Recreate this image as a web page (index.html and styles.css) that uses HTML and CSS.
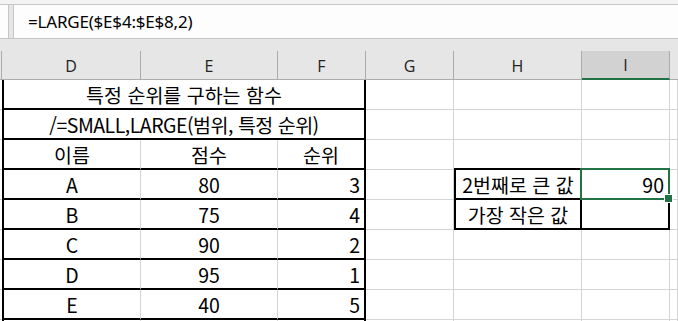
FILE: index.html
```html
<!DOCTYPE html>
<html lang="ko">
<head>
<meta charset="utf-8">
<title>LARGE 함수</title>
<link rel="stylesheet" href="styles.css">
</head>
<body>
<div class="app">
  <div class="top-strip"></div>
  <div class="formula-bar">
    <div class="name-box"></div>
    <div class="fx-input">=LARGE($E$4:$E$8,2)</div>
  </div>
  <div class="ribbon-gap"></div>

  <div class="sheet">
    <!-- column headers -->
    <div class="hd corner"></div>
    <div class="hd">D</div>
    <div class="hd">E</div>
    <div class="hd">F</div>
    <div class="hd">G</div>
    <div class="hd">H</div>
    <div class="hd selected">I</div>
    <div class="hd last"></div>

    <!-- row 1 -->
    <div class="c strip"></div>
    <div class="c span3 box-l box-r box-b center">특정 순위를 구하는 함수</div>
    <div class="c"></div>
    <div class="c"></div>
    <div class="c"></div>
    <div class="c"></div>

    <!-- row 2 -->
    <div class="c strip"></div>
    <div class="c span3 box-l box-r box-b center tight">/=SMALL,LARGE(범위, 특정 순위)</div>
    <div class="c"></div>
    <div class="c"></div>
    <div class="c"></div>
    <div class="c"></div>

    <!-- row 3 -->
    <div class="c strip"></div>
    <div class="c box-l box-b center">이름</div>
    <div class="c box-b center">점수</div>
    <div class="c box-r box-b center">순위</div>
    <div class="c"></div>
    <div class="c box-b"></div>
    <div class="c box-b"></div>
    <div class="c"></div>

    <!-- row 4 -->
    <div class="c strip"></div>
    <div class="c box-l box-b center">A</div>
    <div class="c box-b center">80</div>
    <div class="c box-r box-b right">3</div>
    <div class="c"></div>
    <div class="c box-l box-r box-b center">2번째로 큰 값</div>
    <div class="c box-r box-b right active">90</div>
    <div class="c"></div>

    <!-- row 5 -->
    <div class="c strip"></div>
    <div class="c box-l box-b center">B</div>
    <div class="c box-b center">75</div>
    <div class="c box-r box-b right">4</div>
    <div class="c"></div>
    <div class="c box-l box-r box-b center">가장 작은 값</div>
    <div class="c box-r box-b right"></div>
    <div class="c"></div>

    <!-- row 6 -->
    <div class="c strip"></div>
    <div class="c box-l box-b center">C</div>
    <div class="c box-b center">90</div>
    <div class="c box-r box-b right">2</div>
    <div class="c"></div>
    <div class="c"></div>
    <div class="c"></div>
    <div class="c"></div>

    <!-- row 7 -->
    <div class="c strip"></div>
    <div class="c box-l box-b center">D</div>
    <div class="c box-b center">95</div>
    <div class="c box-r box-b right">1</div>
    <div class="c"></div>
    <div class="c"></div>
    <div class="c"></div>
    <div class="c"></div>

    <!-- row 8 -->
    <div class="c strip"></div>
    <div class="c box-l box-b center">E</div>
    <div class="c box-b center">40</div>
    <div class="c box-r box-b right">5</div>
    <div class="c"></div>
    <div class="c"></div>
    <div class="c"></div>
    <div class="c"></div>

    <!-- row 9, only its top edge shows -->
    <div class="c strip"></div>
    <div class="c box-l"></div>
    <div class="c"></div>
    <div class="c box-r"></div>
    <div class="c"></div>
    <div class="c"></div>
    <div class="c"></div>
    <div class="c"></div>
  </div>
</div>
</body>
</html>
```

FILE: styles.css
```css
* { box-sizing: border-box; }

html, body {
  margin: 0;
  padding: 0;
  width: 678px;
  height: 321px;
  overflow: hidden;
  background: #ffffff;
}

.app {
  display: flex;
  flex-direction: column;
  width: 678px;
  font-family: "Noto Sans CJK KR", sans-serif;
  color: #000;
}

.top-strip {
  height: 4px;
  background: #f3f3f3;
}

.formula-bar {
  height: 35px;
  display: flex;
  gap: 4px;
  background: #e6e6e6;
  border-top: 1px solid #c6c6c6;
  border-bottom: 1px solid #c6c6c6;
}

.name-box {
  width: 9px;
  background: #fdfdfd;
  border-right: 1px solid #c6c6c6;
}

.fx-input {
  flex: 1;
  background: #fdfdfd;
  border-left: 1px solid #c6c6c6;
  padding-left: 14px;
  display: flex;
  align-items: center;
  font-family: "Noto Sans", "Noto Sans CJK KR", sans-serif;
  font-size: 17px;
  letter-spacing: -0.2px;
}

.ribbon-gap {
  height: 12px;
  background: #e6e6e6;
}

.sheet {
  display: grid;
  grid-template-columns: 2px 139px 137px 88px 88px 128px 88px 1fr;
  grid-template-rows: 29px repeat(8, 30px) 2px;
}

/* column headers */
.hd {
  background: #e6e6e6;
  border-right: 1px solid #ababab;
  border-bottom: 1px solid #ababab;
  display: flex;
  align-items: center;
  justify-content: center;
  font-family: "Open Sans", sans-serif;
  font-size: 16px;
  color: #222;
  padding-top: 1px;
}
.hd.last { border-right: none; }
.hd.selected {
  background: #d2d2d2;
  border-bottom: 2px solid #217346;
}

/* cells */
.c {
  border-right: 1px solid #d4d4d4;
  border-bottom: 1px solid #d4d4d4;
  display: flex;
  align-items: center;
  padding: 0 3px;
  font-size: 19.5px;
  white-space: nowrap;
  position: relative;
}
.c.strip { border-right: none; }
.c.span3 { grid-column: span 3; }
.c.center { justify-content: center; }
.c.right { justify-content: flex-end; padding-right: 4px; }
.c.tight { letter-spacing: -0.5px; }

.c.box-l { border-left: 2px solid #000; }
.c.box-r { border-right: 2px solid #000; }
.c.box-b { border-bottom: 2px solid #000; }

/* active cell selection */
.c.active::after {
  content: "";
  position: absolute;
  left: -2px;
  top: -2px;
  right: -2px;
  bottom: -2px;
  border: 2px solid #217346;
}
.c.active::before {
  content: "";
  position: absolute;
  right: -5px;
  bottom: -5px;
  width: 7px;
  height: 7px;
  background: #217346;
  border: 1px solid #fff;
  z-index: 2;
}
```
